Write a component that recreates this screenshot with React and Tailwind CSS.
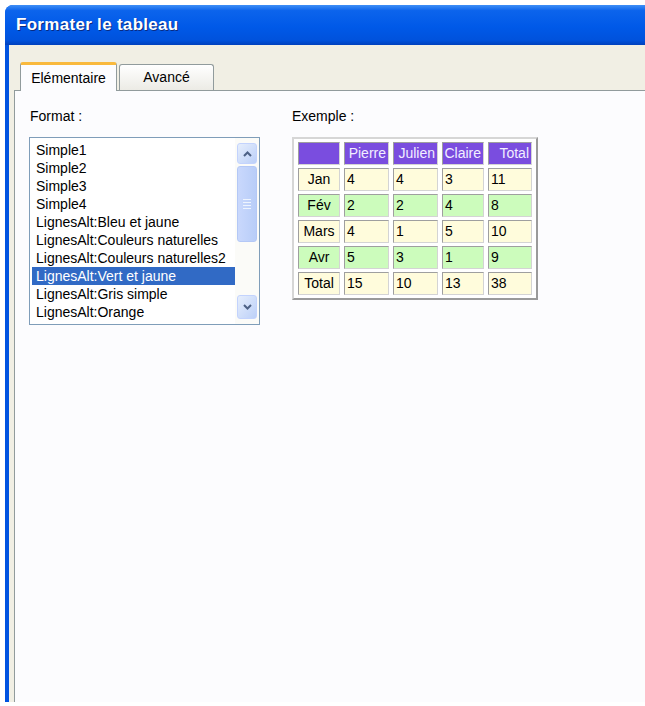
const formats = [
  "Simple1",
  "Simple2",
  "Simple3",
  "Simple4",
  "LignesAlt:Bleu et jaune",
  "LignesAlt:Couleurs naturelles",
  "LignesAlt:Couleurs naturelles2",
  "LignesAlt:Vert et jaune",
  "LignesAlt:Gris simple",
  "LignesAlt:Orange",
];

const headers = ["Pierre", "Julien", "Claire", "Total"];

const rows = [
  { label: "Jan", values: [4, 4, 3, 11], green: false },
  { label: "Fév", values: [2, 2, 4, 8], green: true },
  { label: "Mars", values: [4, 1, 5, 10], green: false },
  { label: "Avr", values: [5, 3, 1, 9], green: true },
  { label: "Total", values: [15, 10, 13, 38], green: false },
];

const colWidths = ["w-[42px]", "w-[45px]", "w-[45px]", "w-[42px]", "w-[44px]"];

const cellBorder =
  "border border-t-[#9f9f9f] border-l-[#9f9f9f] border-b-[#d4d4d4] border-r-[#d4d4d4]";

const ArrowUp = () => (
  <svg width="9" height="6" viewBox="0 0 9 6">
    <path d="M1 5 L4.5 1.5 L8 5" fill="none" stroke="#4d6185" strokeWidth="2" />
  </svg>
);

const ArrowDown = () => (
  <svg width="9" height="6" viewBox="0 0 9 6">
    <path d="M1 1 L4.5 4.5 L8 1" fill="none" stroke="#4d6185" strokeWidth="2" />
  </svg>
);

const ScrollBar = () => (
  <div className="w-[24px] flex flex-col items-center py-[5px] bg-[#fbfbf8]">
    <div className="w-[20px] h-[21px] rounded-[3px] border border-[#c3d3fd] bg-linear-to-br from-[#e6eefc] to-[#bcd0f8] flex items-center justify-center">
      <ArrowUp />
    </div>
    <div className="w-[20px] h-[76px] mt-[2px] rounded-[3px] border border-[#b4c8f6] bg-linear-to-r from-[#c9d8fc] to-[#b8cdf8] flex flex-col items-center justify-center gap-[2px]">
      <div className="w-[8px] h-px bg-[#eef4fe]" />
      <div className="w-[8px] h-px bg-[#eef4fe]" />
      <div className="w-[8px] h-px bg-[#eef4fe]" />
      <div className="w-[8px] h-px bg-[#eef4fe]" />
    </div>
    <div className="flex-1" />
    <div className="w-[20px] h-[24px] rounded-[3px] border border-[#c3d3fd] bg-linear-to-br from-[#e6eefc] to-[#bcd0f8] flex items-center justify-center">
      <ArrowDown />
    </div>
  </div>
);

const App = () => {
  return (
    <div className="w-[645px] h-[706px] bg-white pt-[5px] pl-[5px] pb-[4px] font-['Liberation_Sans',Arial,sans-serif] text-[14px] text-black overflow-hidden">
      <div className="h-full flex flex-col rounded-tl-[8px] overflow-hidden bg-[#0053e0]">
        <div className="h-[40px] shrink-0 flex items-center pl-[11px] bg-[linear-gradient(to_bottom,#3f8ff6_0%,#0c64ec_14%,#0059e8_55%,#0052dc_88%,#0040bc_100%)]">
          <span className="text-white font-bold text-[17px] tracking-[0.3px] [text-shadow:1px_1px_0_#0a2a80]">
            Formater le tableau
          </span>
        </div>

        <div className="flex-1 flex flex-col ml-[4px] bg-[#f1efe4] pl-[5px]">
          <div className="h-[45px] shrink-0 flex items-end pl-[6px]">
            <div className="relative z-10 -mb-px w-[97px] h-[29px] flex items-center justify-center rounded-t-[3px] border-x border-[#919b9c] bg-[#fcfcfe] border-t-[3px] border-t-[#f9b93d]">
              Elémentaire
            </div>
            <div className="w-[95px] h-[26px] ml-[2px] flex items-center justify-center rounded-t-[3px] border border-b-0 border-[#919b9c] bg-linear-to-b from-[#ffffff] to-[#ecebe5]">
              Avancé
            </div>
          </div>

          <div className="flex-1 flex gap-[32px] border-t border-l border-[#919b9c] bg-[#fcfcfe] pl-[14px] pt-[17px]">
            <div className="flex flex-col">
              <div className="h-[17px] leading-[17px] pl-px">Format :</div>
              <div className="mt-[12px] w-[231px] h-[188px] flex border border-[#7f9db9] bg-white">
                <div className="flex-1 pt-[3px] pl-[2px]">
                  {formats.map((f) => (
                    <div
                      key={f}
                      className={`h-[18px] leading-[18px] pl-[4px] whitespace-nowrap ${
                        f === "LignesAlt:Vert et jaune" ? "bg-[#316ac5] text-white" : ""
                      }`}
                    >
                      {f}
                    </div>
                  ))}
                </div>
                <ScrollBar />
              </div>
            </div>

            <div className="flex flex-col">
              <div className="h-[17px] leading-[17px]">Exemple :</div>
              <table className="mt-[12px] table-fixed border-separate border-spacing-x-[4px] border-spacing-y-[3px] border-2 border-t-[#d6d6d6] border-l-[#d6d6d6] border-b-[#9a9a9a] border-r-[#9a9a9a] bg-white">
                <tbody>
                  <tr className="h-[23px]">
                    <td className={`${colWidths[0]} bg-[#7a4ddf] ${cellBorder}`} />
                    {headers.map((h, i) => (
                      <td
                        key={h}
                        className={`${colWidths[i + 1]} bg-[#7a4ddf] text-[#f2efff] text-right pr-[2px] ${cellBorder}`}
                      >
                        {h}
                      </td>
                    ))}
                  </tr>
                  {rows.map((r) => (
                    <tr key={r.label} className="h-[23px]">
                      <td
                        className={`text-center ${cellBorder} ${
                          r.green ? "bg-[#ccfcbc]" : "bg-[#fffcdc]"
                        }`}
                      >
                        {r.label}
                      </td>
                      {r.values.map((v, i) => (
                        <td
                          key={i}
                          className={`pl-[2px] ${cellBorder} ${
                            r.green ? "bg-[#ccfcbc]" : "bg-[#fffcdc]"
                          }`}
                        >
                          {v}
                        </td>
                      ))}
                    </tr>
                  ))}
                </tbody>
              </table>
            </div>
          </div>
        </div>
      </div>
    </div>
  );
};

export default App;
